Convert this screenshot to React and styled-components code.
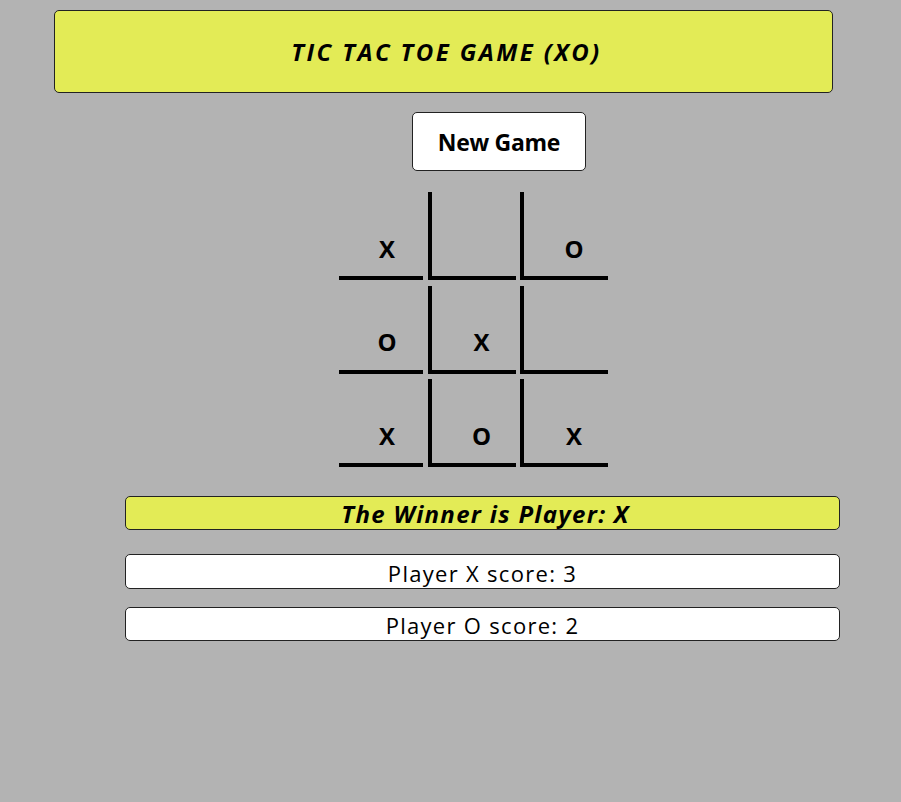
import React, { useState } from 'react';
import styled, { createGlobalStyle } from 'styled-components';

const GlobalStyle = createGlobalStyle`
  html, body {
    margin: 0;
    padding: 0;
    background-color: #b3b3b3;
    font-family: "Comic Sans MS", "Open Sans", sans-serif;
    color: #000;
  }
`;

const initialBoard = ['X', '', 'O', 'O', 'X', '', 'X', 'O', 'X'];

function App() {
  const [board, setBoard] = useState(initialBoard);
  const [scores] = useState({ X: 3, O: 2 });

  const handleNewGame = () => {
    setBoard(Array(9).fill(''));
  };

  return (
    <Page>
      <GlobalStyle />
      <Header>
        <Title>TIC TAC TOE GAME (XO)</Title>
      </Header>
      <NewGameButton type="button" onClick={handleNewGame}>New Game</NewGameButton>
      <Board>
        {board.map((value, i) => (
          <Cell key={i} $first={i % 3 === 0}>{value}</Cell>
        ))}
      </Board>
      <Winner>The Winner is Player: X</Winner>
      <Score $top={24} $height={35}>Player X score: {scores.X}</Score>
      <Score $top={18} $height={34}>Player O score: {scores.O}</Score>
    </Page>
  );
}

const Page = styled.div`
  padding-top: 10px;
  min-height: 802px;
  box-sizing: border-box;
  display: flex;
  flex-direction: column;
  align-items: flex-start;
`;

const Header = styled.div`
  margin-left: 54px;
  width: 779px;
  height: 83px;
  box-sizing: border-box;
  background-color: #e3eb56;
  border: 1px solid #222;
  border-radius: 5px;
  display: flex;
  align-items: center;
  justify-content: center;
`;

const Title = styled.h1`
  margin: 0 0 0 6px;
  font-size: 24px;
  font-weight: 700;
  font-style: italic;
  letter-spacing: 2.4px;
`;

const NewGameButton = styled.button`
  margin: 19px 0 0 412px;
  width: 174px;
  height: 59px;
  box-sizing: border-box;
  background-color: #fff;
  border: 1px solid #222;
  border-radius: 5px;
  font-family: inherit;
  font-size: 23px;
  font-weight: 700;
  letter-spacing: -0.3px;
  color: #000;
  cursor: pointer;
  padding: 0;
`;

const Board = styled.div`
  margin: 21px 0 0 339px;
  display: grid;
  grid-template-columns: 84px 88px 88px;
  grid-auto-rows: 88px;
  column-gap: 4.5px;
  row-gap: 5.5px;
`;

const Cell = styled.div`
  box-sizing: border-box;
  border-bottom: 4px solid #000;
  border-left: ${props => (props.$first ? 'none' : '4px solid #000')};
  padding: 28px 0 0 ${props => (props.$first ? 12 : 16)}px;
  display: flex;
  align-items: center;
  justify-content: center;
  font-size: 24px;
  font-weight: 700;
`;

const Winner = styled.div`
  margin: 29px 0 0 125px;
  width: 715px;
  height: 34px;
  box-sizing: border-box;
  background-color: #e3eb56;
  border: 1px solid #222;
  border-radius: 5px;
  display: flex;
  align-items: center;
  justify-content: center;
  padding-left: 6px;
  font-size: 24px;
  font-weight: 700;
  font-style: italic;
  letter-spacing: 1.3px;
`;

const Score = styled.div`
  margin: ${props => props.$top}px 0 0 125px;
  width: 715px;
  height: ${props => props.$height}px;
  box-sizing: border-box;
  background-color: #fff;
  border: 1px solid #222;
  border-radius: 5px;
  display: flex;
  align-items: center;
  justify-content: center;
  padding-top: 2px;
  font-size: 22px;
  letter-spacing: 1.3px;
`;

export default App;
